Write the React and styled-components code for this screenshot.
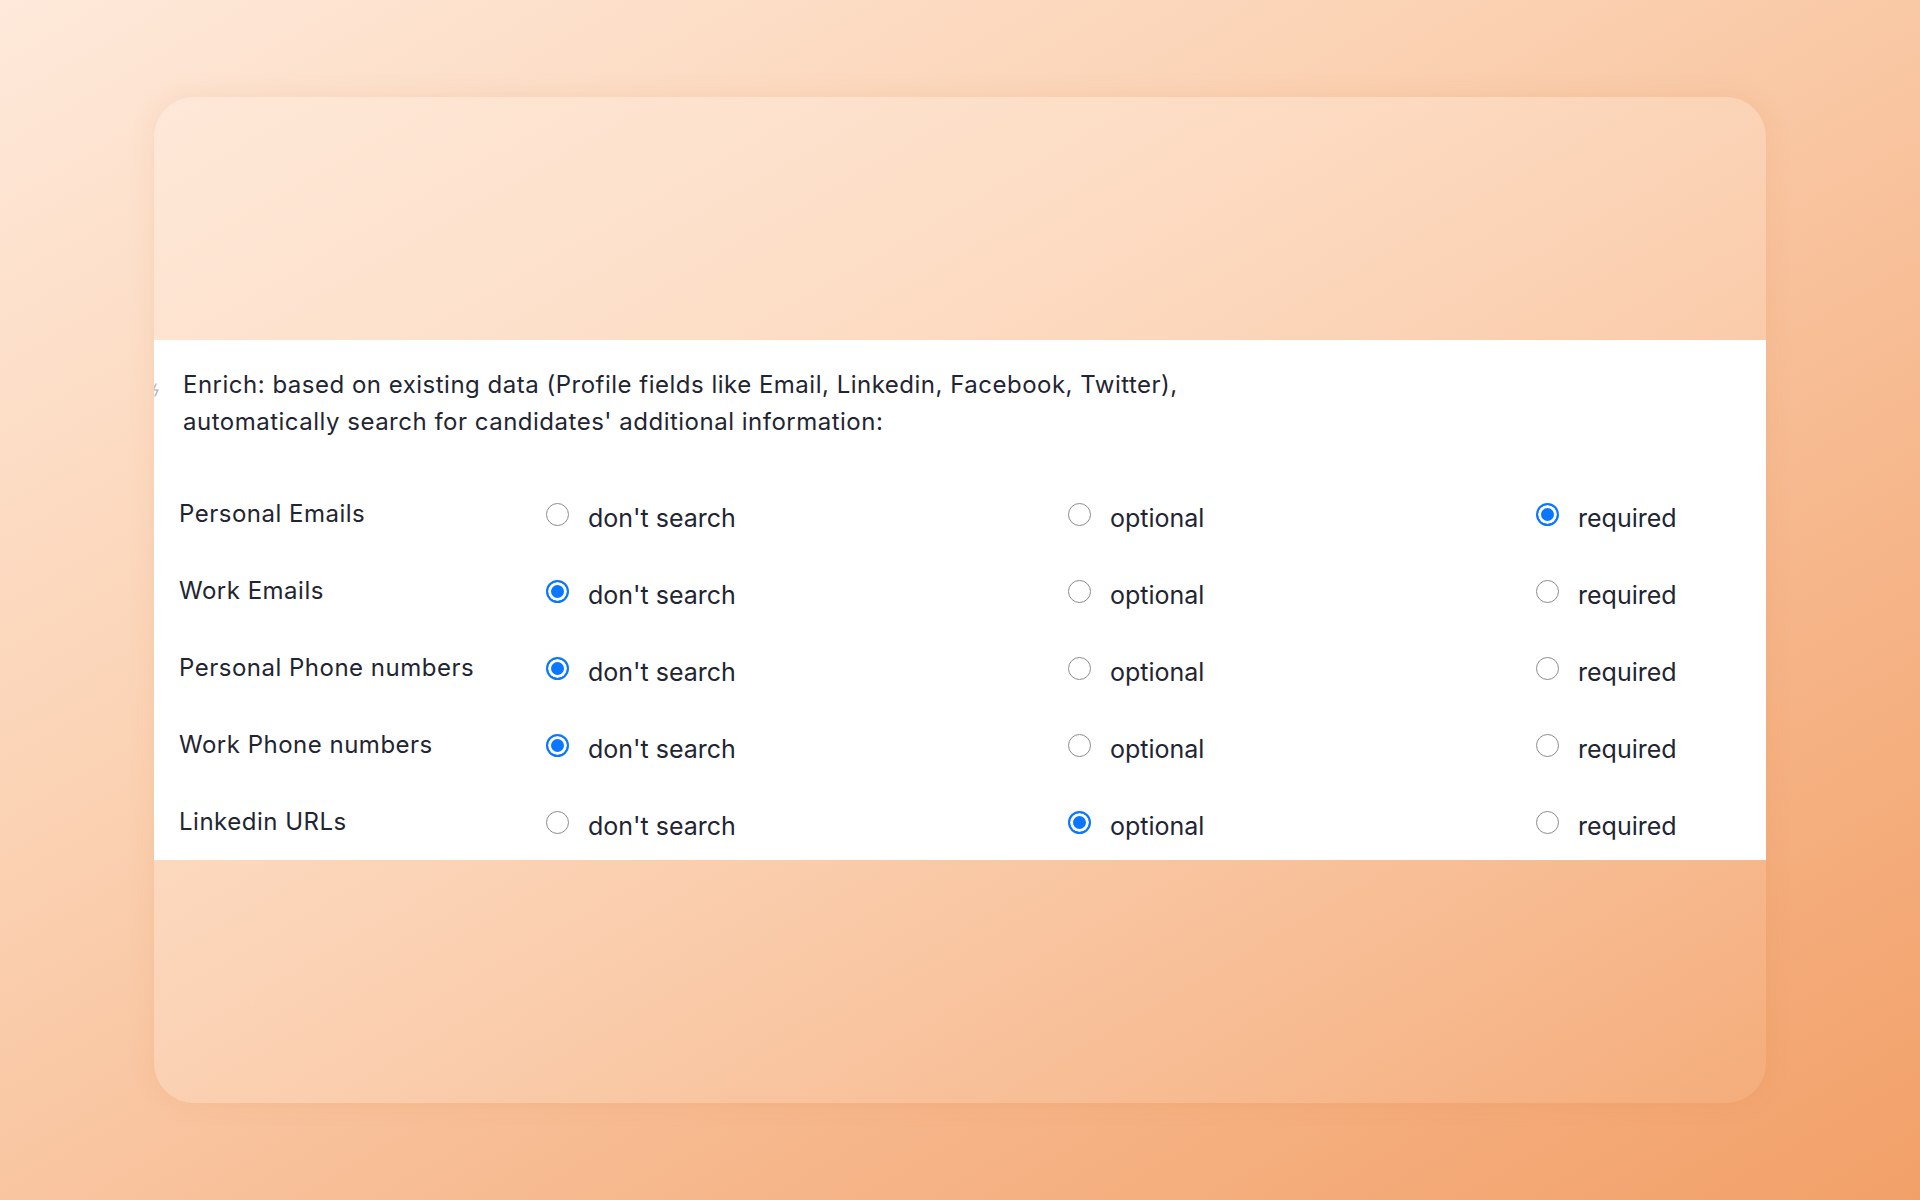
import React from 'react';
import styled, { createGlobalStyle } from 'styled-components';

const GlobalStyle = createGlobalStyle`
  html, body {
    margin: 0;
    padding: 0;
  }
  body {
    font-family: Inter, "Noto Sans", "Liberation Sans", sans-serif;
    -webkit-font-smoothing: antialiased;
  }
`;

// page backdrop
const Page = styled.div`
  width: 1920px;
  height: 1200px;
  box-sizing: border-box;
  padding: 97px 154px 0 154px;
  background: linear-gradient(150deg, #fee9da 0%, #fbd3b5 35%, #f6b68a 70%, #f2a068 100%);
`;

const Card = styled.div`
  height: 1006px;
  border-radius: 40px;
  background: linear-gradient(150deg, rgba(255, 235, 220, 0.55) 0%, rgba(255, 220, 190, 0.12) 100%);
  box-shadow: 0 0 26px rgba(205, 120, 60, 0.12);
  padding-top: 243px;
  box-sizing: border-box;
  overflow: hidden;
`;

const Panel = styled.div`
  background: #fff;
  height: 520px;
  box-sizing: border-box;
  padding: 26px 0 0 25px;
  overflow: hidden;
  color: #1f2533;
`;

const Intro = styled.p`
  position: relative;
  margin: 0;
  padding-left: 4px;
  font-size: 24px;
  line-height: 37px;
  letter-spacing: 0.5px;
`;

const Marker = styled.svg`
  position: absolute;
  left: -28px;
  top: 17px;
`;

const Grid = styled.div`
  display: grid;
  grid-template-columns: 367px 522px 468px 1fr;
  grid-auto-rows: 77px;
  margin-top: 36px;
`;

const Label = styled.div`
  display: flex;
  align-items: center;
  font-size: 24px;
  letter-spacing: 0.5px;
  padding-bottom: 2px;
`;

const Option = styled.label`
  display: flex;
  align-items: center;
  gap: 19px;
  font-size: 25px;
  letter-spacing: 0;
`;

const OptionText = styled.span`
  position: relative;
  top: 3px;
`;

const Radio = styled.span`
  width: 23px;
  height: 23px;
  box-sizing: border-box;
  border-radius: 50%;
  flex: none;
  border: ${({ checked }) => (checked ? '2px solid #0b76ff' : '1.6px solid #8c8c8c')};
  background: ${({ checked }) => (checked ? '#0b76ff' : '#fff')};
  box-shadow: ${({ checked }) => (checked ? 'inset 0 0 0 3px #fff' : 'none')};
`;

const choices = ["don't search", 'optional', 'required'];

const rows = [
  { name: 'Personal Emails', value: 2 },
  { name: 'Work Emails', value: 0 },
  { name: 'Personal Phone numbers', value: 0 },
  { name: 'Work Phone numbers', value: 0 },
  { name: 'Linkedin URLs', value: 1 },
];

const App = () => {
  return (
    <Page>
      <GlobalStyle />
      <Card>
        <Panel>
          <Intro>
            <Marker width="12" height="14" viewBox="0 0 12 14">
              <path d="M5 1 L2 7 L7 7 L4 13" fill="none" stroke="#b9b9b9" strokeWidth="1.6" strokeLinecap="round" strokeLinejoin="round" />
            </Marker>
            Enrich: based on existing data (Profile fields like Email, Linkedin, Facebook, Twitter),
            <br />
            automatically search for candidates' additional information:
          </Intro>
          <Grid>
            {rows.map((row) => (
              <React.Fragment key={row.name}>
                <Label>{row.name}</Label>
                {choices.map((choice, i) => (
                  <Option key={choice}>
                    <Radio checked={row.value === i} />
                    <OptionText>{choice}</OptionText>
                  </Option>
                ))}
              </React.Fragment>
            ))}
          </Grid>
        </Panel>
      </Card>
    </Page>
  );
};

export default App;
